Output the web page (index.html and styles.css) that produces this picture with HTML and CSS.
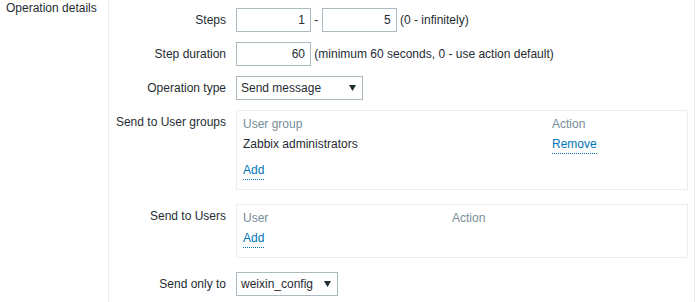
FILE: index.html
```html
<!DOCTYPE html>
<html lang="en">

<head>
	<meta charset="utf-8" />
	<title>Operation details</title>
	<link rel="stylesheet" href="styles.css">
</head>

<body>
	<div class="form">
		<div class="section-label">Operation details</div>
		<div class="details">
			<ul class="form-list">
				<li class="row">
					<label>Steps</label>
					<div class="field">
						<span class="input">1</span> - <span class="input">5</span> (0 - infinitely)
					</div>
				</li>
				<li class="row">
					<label>Step duration</label>
					<div class="field">
						<span class="input">60</span> (minimum 60 seconds, 0 - use action default)
					</div>
				</li>
				<li class="row">
					<label>Operation type</label>
					<div class="field">
						<div class="select wide">
							<span>Send message</span>
							<svg width="7" height="6" viewBox="0 0 7 6"><polygon points="0 0, 7 0, 3.5 6"></polygon></svg>
						</div>
					</div>
				</li>
				<li class="row row-box">
					<label>Send to User groups</label>
					<div class="field">
						<div class="box groups">
							<div class="head">User group</div>
							<div class="head">Action</div>
							<div class="cell">Zabbix administrators</div>
							<div class="cell"><a href="#">Remove</a></div>
							<div class="add"><a href="#">Add</a></div>
						</div>
					</div>
				</li>
				<li class="row row-box">
					<label>Send to Users</label>
					<div class="field">
						<div class="box users">
							<div class="head">User</div>
							<div class="head">Action</div>
							<div class="add"><a href="#">Add</a></div>
						</div>
					</div>
				</li>
				<li class="row">
					<label>Send only to</label>
					<div class="field">
						<div class="select narrow">
							<span>weixin_config</span>
							<svg width="7" height="6" viewBox="0 0 7 6"><polygon points="0 0, 7 0, 3.5 6"></polygon></svg>
						</div>
					</div>
				</li>
			</ul>
		</div>
	</div>
</body>

</html>
```

FILE: styles.css
```css
body {
	margin: 0;
	font-family: "Liberation Sans", Arial, sans-serif;
	font-size: 12px;
	color: #1f2c33;
	background: #fff;
}

.form {
	display: flex;
	width: 695px;
	min-height: 100vh;
}

.section-label {
	width: 102px;
	padding: 1px 0 0 6px;
	line-height: 14px;
}

.details {
	flex: 1;
	border-left: 1px solid #ebeef0;
	border-right: 1px solid #ebeef0;
}

.form-list {
	list-style: none;
	margin: 0;
	padding: 8px 6px 0 0;
}

.row {
	display: flex;
	gap: 10px;
	margin-bottom: 10px;
	line-height: 24px;
}

.row-box {
	margin-bottom: 14px;
}

.row label {
	width: 117px;
	flex: none;
	text-align: right;
}

.field {
	flex: 1;
	white-space: nowrap;
}

.input {
	display: inline-block;
	vertical-align: top;
	box-sizing: border-box;
	width: 75px;
	height: 24px;
	padding: 0 5px;
	border: 1px solid #acbbc2;
	line-height: 22px;
	text-align: right;
}

.select {
	display: flex;
	align-items: center;
	justify-content: space-between;
	box-sizing: border-box;
	height: 24px;
	padding: 0 6px 0 4px;
	border: 1px solid #acbbc2;
}

.select svg {
	fill: #1f2c33;
}

.wide {
	width: 127px;
}

.narrow {
	width: 102px;
}

.box {
	display: grid;
	box-sizing: border-box;
	width: 452px;
	padding: 3px 6px 9px;
	border: 1px solid #ebeef0;
	line-height: 20px;
}

.groups {
	grid-template-columns: 309px 1fr;
}

.users {
	grid-template-columns: 209px 1fr;
}

.head {
	color: #768d99;
}

.cell {
	padding-bottom: 6px;
}

.add {
	grid-column: 1 / 3;
}

a {
	color: #0275b8;
	text-decoration: none;
	border-bottom: 1px dotted #0275b8;
	padding-bottom: 2px;
}
```
